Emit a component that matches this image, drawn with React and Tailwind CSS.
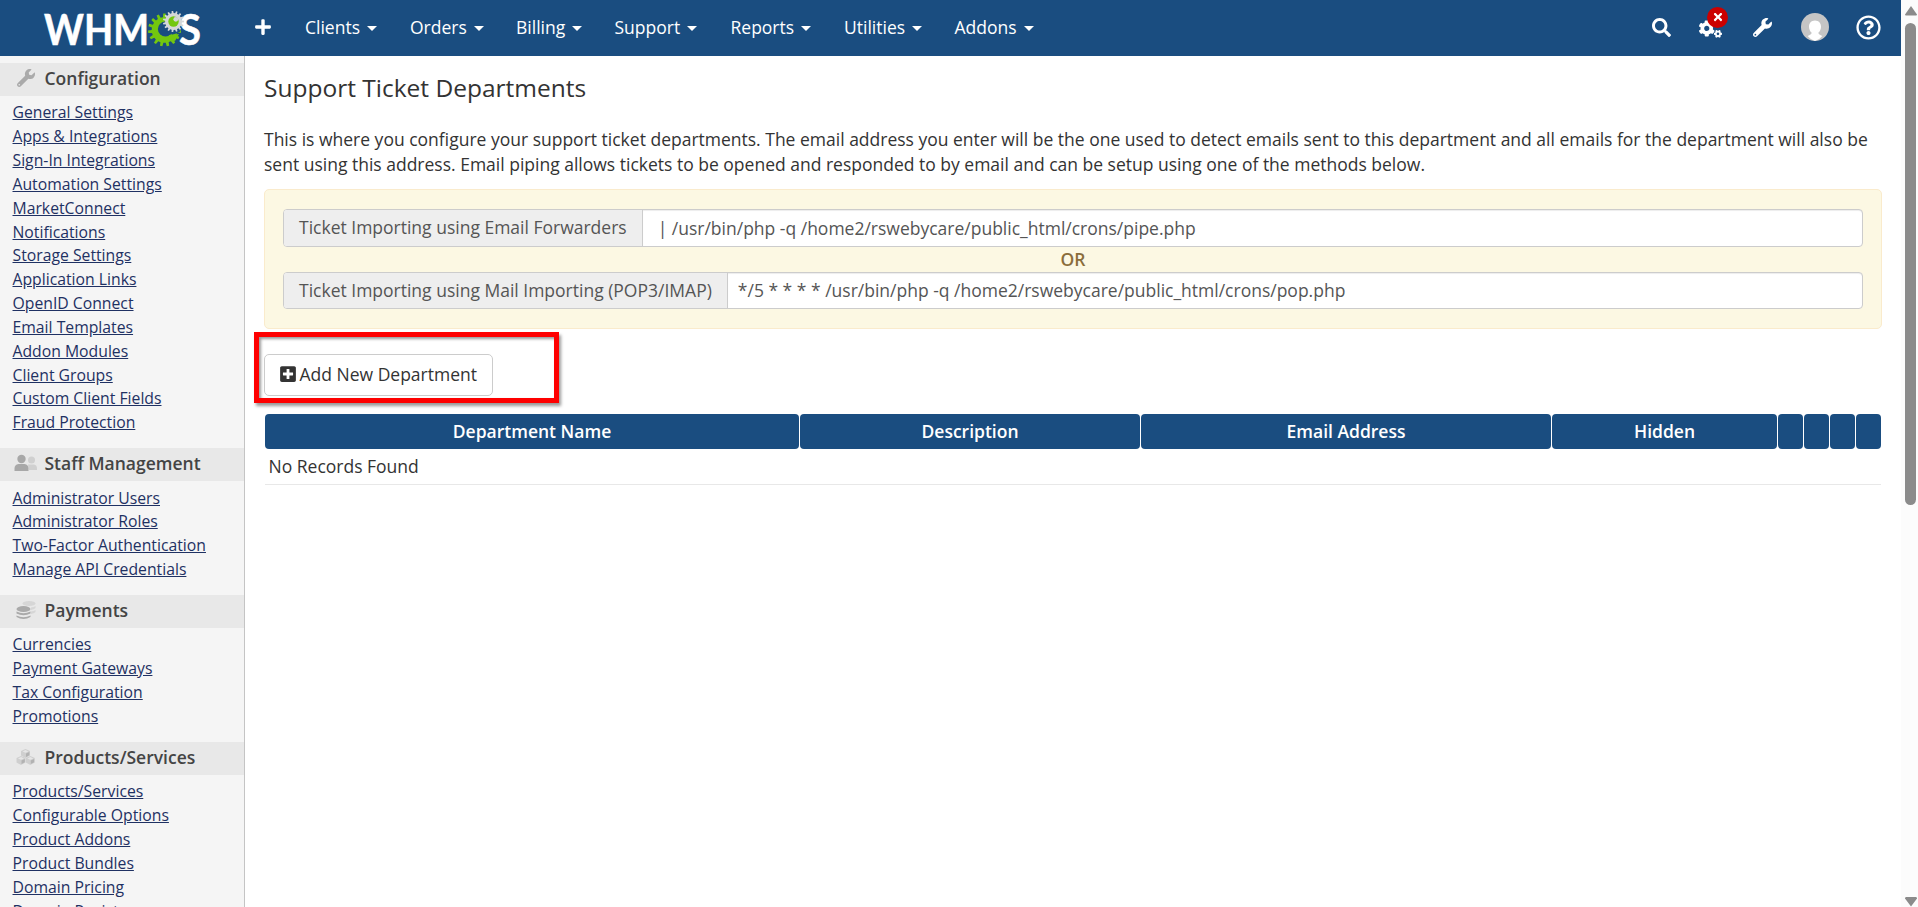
import React from "react";
import { FaPlus, FaSearch, FaCogs, FaWrench, FaRegQuestionCircle, FaPlusSquare, FaTimes } from "react-icons/fa";

function gearPath(cx, cy, outer, inner, teeth, turn = 0) {
  const step = (Math.PI * 2) / teeth;
  const at = (r, a) => `${(cx + r * Math.cos(a)).toFixed(2)} ${(cy + r * Math.sin(a)).toFixed(2)}`;
  const points = [];
  for (let i = 0; i < teeth; i++) {
    const a = i * step + turn;
    points.push(at(inner, a - step * 0.28), at(outer, a - step * 0.18), at(outer, a + step * 0.18), at(inner, a + step * 0.28));
  }
  return `M${points.join("L")}Z`;
}

function Logo() {
  return (
    <svg width="160" height="56" viewBox="0 0 160 56" className="block font-['Lato']">
      <g fill="#fff" stroke="#fff" strokeWidth="0.5" fontWeight="700" fontSize="42">
        <text x="1" y="45" textLength="105" lengthAdjust="spacingAndGlyphs">WHM</text>
        <text x="136" y="45" textLength="22" lengthAdjust="spacingAndGlyphs">S</text>
      </g>
      <path d={gearPath(121.500, 30, 16.500, 12.800, 15, 0.1)} fill="#73c70f" />
      <circle cx="122.500" cy="29" r="7.6" fill="#1a4d80" />
      <path d="M123.500 27L136 22L137 32L129 35Z" fill="#1a4d80" />
      <path d="M126 35L136 34L132 41L125 39Z" fill="#73c70f" />
      <path d={gearPath(130.500, 21.500, 10.600, 8.400, 15)} fill="#d5d7d8" />
      <circle cx="130.500" cy="21.500" r="5.2" fill="#73c70f" />
      <circle cx="132.800" cy="19.300" r="2.4" fill="#d5d7d8" />
    </svg>
  );
}

function Caret() {
  return (
    <svg width="10" height="5" viewBox="0 0 10 5" className="mt-[3px]">
      <path d="M0 0H10L5 5Z" fill="currentColor" />
    </svg>
  );
}

const menu = [
  ["Clients", "w-[105px]"],
  ["Orders", "w-[106px]"],
  ["Billing", "w-[98.500px]"],
  ["Support", "w-[116px]"],
  ["Reports", "w-[113.500px]"],
  ["Utilities", "w-[110.500px]"],
  ["Addons", "w-[100px]"],
];

function TopBar() {
  return (
    <header className="flex h-14 items-center bg-[#1a4d80] text-white">
      <div className="ml-[43px] w-[212px]"><Logo /></div>
      <FaPlus size={18} className="-ml-px mr-[33px] -mt-0.5" />
      <nav className="-mt-0.5 flex">
        {menu.map(([name, width]) => (
          <a key={name} className={`flex items-center gap-[7px] whitespace-nowrap ${width}`}>{name}<Caret /></a>
        ))}
      </nav>
      <div className="ml-auto flex items-center pr-5">
        <FaSearch size={19} className="mr-[28px] -mt-0.5" />
        <div className="relative mr-[31px]">
          <FaCogs size={23} />
          <span className="absolute -top-[10px] left-[8px] flex size-[21px] items-center justify-center rounded-full bg-[#c00]"><FaTimes size={12} /></span>
        </div>
        <FaWrench size={19} className="mr-[29px] -mt-0.5" />
        <svg width="28" height="28" viewBox="0 0 28 28" className="mr-[27px] -mt-0.5">
          <circle cx="14" cy="14" r="14" fill="#c5c5c5" />
          <path d="M14 7.5c-3.8 0-6 2.8-6 6.3 0 2.600 1.200 4.800 2.700 6-.2 1.700-1.700 2-4 3.100A14 14 0 0 0 14 28a14 14 0 0 0 7.300-5.100c-2.300-1.100-3.800-1.400-4-3.100 1.500-1.200 2.700-3.400 2.700-6 0-3.500-2.200-6.300-6-6.300Z" fill="#fff" />
        </svg>
        <FaRegQuestionCircle size={25} className="-mt-px" />
      </div>
    </header>
  );
}

function StaffIcon() {
  return (
    <svg width="24" height="20" viewBox="0 0 24 20">
      <g fill="#d0d0d0"><circle cx="17.500" cy="6" r="3.500" /><path d="M14 10.500h6q3 .5 3 4v1.500h-8Z" /></g>
      <g fill="#a8a8a8"><circle cx="7.500" cy="5" r="4.200" /><path d="M.5 17v-2.500q0-4 4-4.500h6q4 .5 4 4.500V17Z" /></g>
    </svg>
  );
}

function CoinsIcon() {
  return (
    <svg width="20" height="20" viewBox="0 0 20 20">
      <g fill="#d6d6d6"><ellipse cx="13" cy="3.500" rx="6.500" ry="2.500" /><path d="M15 7.500q3-.5 4.500-1.500v2q-1.500 1.500-4.500 2ZM15 11.500q3-.5 4.500-1.500v2q-1.500 1.500-4.500 2Z" /></g>
      <g fill="#aaa"><ellipse cx="7.500" cy="9" rx="7" ry="3" /><path d="M.5 11.500q7 3.500 14 0v2q-7 3.500-14 0ZM.5 15.500q7 3.500 14 0v1.500q-7 4-14 0Z" /></g>
    </svg>
  );
}

function CubesIcon() {
  return (
    <svg width="20" height="18" viewBox="0 0 20 18">
      {["5 1", "0.5 8", "9.800 8"].map((p) => (
        <g key={p} transform={`translate(${p})`}>
          <path d="M4.500 0L9 2V6.500L4.500 9L0 6.500V2Z" fill="#cfcfcf" />
          <path d="M4.500 1L7.500 2.400L4.500 3.700L1.500 2.400Z" fill="#e6e6e6" />
          <path d="M5 4.500L8.300 3V6.200L5 8Z" fill="#b2b2b2" />
        </g>
      ))}
    </svg>
  );
}

const sections = [
  {
    title: "Configuration",
    icon: <FaWrench size={18} color="#aaa" />,
    links: ["General Settings", "Apps & Integrations", "Sign-In Integrations", "Automation Settings", "MarketConnect", "Notifications", "Storage Settings", "Application Links", "OpenID Connect", "Email Templates", "Addon Modules", "Client Groups", "Custom Client Fields", "Fraud Protection"],
  },
  { title: "Staff Management", icon: <StaffIcon />, links: ["Administrator Users", "Administrator Roles", "Two-Factor Authentication", "Manage API Credentials"] },
  { title: "Payments", icon: <CoinsIcon />, links: ["Currencies", "Payment Gateways", "Tax Configuration", "Promotions"] },
  { title: "Products/Services", icon: <CubesIcon />, links: ["Products/Services", "Configurable Options", "Product Addons", "Product Bundles", "Domain Pricing", "Domain Registrars"] },
];

function Sidebar() {
  return (
    <aside className="w-[245px] shrink-0 overflow-hidden border-r border-[#c4c4c4] bg-[#f5f5f5] pt-[7px]">
      {sections.map((s) => (
        <section key={s.title} className="pb-[13.200px]">
          <h2 className="flex h-[32.500px] items-center bg-[#e8e8e8] pb-[2px] pl-[14px] font-semibold text-[#444]">
            <span className="mr-[6.500px] flex w-6 justify-center">{s.icon}</span>{s.title}
          </h2>
          <ul className="pt-[5.800px] pl-[12.500px] text-[15.750px] leading-[23.850px] text-[#1f3163]">
            {s.links.map((l) => (
              <li key={l}><a className="underline">{l}</a></li>
            ))}
          </ul>
        </section>
      ))}
    </aside>
  );
}

function CommandRow({ label, value, className, labelClass, valueClass }) {
  return (
    <div className={`flex rounded-[4px] border border-[#ccc] bg-white text-[#555] ${className}`}>
      <div className={`flex items-center rounded-l-[3px] border-r border-[#ccc] bg-[#eee] px-[15px] ${labelClass}`}>{label}</div>
      <div className={`flex flex-1 items-center rounded-r-[3px] shadow-[inset_0_1px_1px_rgba(0,0,0,0.075)] ${valueClass}`}>{value}</div>
    </div>
  );
}

const columns = ["Department Name", "Description", "Email Address", "Hidden", "", "", "", ""];

export default function App() {
  return (
    <div className="flex h-[907px] w-[1918px] overflow-hidden bg-white font-['Open_Sans',sans-serif] text-[17.500px] text-[#333]">
      <div className="flex w-[1901px] flex-col">
        <TopBar />
        <div className="flex min-h-0 flex-1">
          <Sidebar />
          <main className="flex-1 pr-[19px] pl-[19px]">
            <h1 className="pt-[15px] text-[24.500px] leading-[34px]">Support Ticket Departments</h1>
            <p className="mt-[22px] text-[17.500px] leading-[25px]">
              This is where you configure your support ticket departments. The email address you enter will be the one used to detect emails sent to this department and all emails for the department will also be sent using this address. Email piping allows tickets to be opened and responded to by email and can be setup using one of the methods below.
            </p>
            <div className="mt-[12px] h-[140px] rounded-[5px] border border-[#faebcc] bg-[#fcf8e3] px-[18px] pt-[19px]">
              <CommandRow className="h-[38px]" label="Ticket Importing using Email Forwarders" value="| /usr/bin/php -q /home2/rswebycare/public_html/crons/pipe.php" labelClass="pb-[2px]" valueClass="pl-[15px]" />
              <div className="text-center leading-[25px] font-semibold text-[#8a6d3b]">OR</div>
              <CommandRow className="h-[37px]" label="Ticket Importing using Mail Importing (POP3/IMAP)" value="*/5 * * * * /usr/bin/php -q /home2/rswebycare/public_html/crons/pop.php" valueClass="pl-[10px]" />
            </div>
            <div className="relative mt-[25px] flex">
              <button className="flex h-[42px] w-[229px] items-center gap-[3px] rounded-[5px] border border-[#ccc] bg-white pb-[2px] pl-[13.500px] whitespace-nowrap">
                <FaPlusSquare size={18} />Add New Department
              </button>
              <div className="absolute -top-[22px] -left-[10px] h-[71px] w-[305px] border-[5px] border-[#fe0000] shadow-[2px_3px_3px_rgba(0,0,0,0.4),inset_2px_2px_3px_rgba(0,0,0,0.4)]" />
            </div>
            <div className="mt-[18px] ml-px grid w-[1616px] grid-cols-[534px_340px_410px_225px_25px_25px_25px_25px] gap-px">
              {columns.map((c, i) => (
                <div key={i} className="flex h-[35px] items-center justify-center rounded-[4px] bg-[#1a4d80] pb-px font-semibold text-white">{c}</div>
              ))}
            </div>
            <div className="ml-px h-[36px] w-[1616px] border-b border-[#e8e8e8] pl-[3.500px] leading-[35px]">No Records Found</div>
          </main>
        </div>
      </div>
      <div className="flex w-[17px] flex-col items-center justify-between bg-[#fcfcfc]">
        <div className="flex flex-col items-center">
          <svg width="12" height="10" viewBox="0 0 12 10" className="mt-[6px] ml-[2px]"><path d="M6 0L12 8.500Q12 9.500 11 9.500H1Q0 9.500 0 8.500Z" fill="#8b8b8b" /></svg>
          <div className="mt-[7px] ml-[2px] h-[482px] w-[11px] rounded-full bg-[#8b8b8b]" />
        </div>
        <svg width="12" height="10" viewBox="0 0 12 10" className="mb-0 ml-[2px]"><path d="M6 9.500L12 1.500Q12 0 11 0H1Q0 0 0 1.500Z" fill="#8b8b8b" /></svg>
      </div>
    </div>
  );
}
